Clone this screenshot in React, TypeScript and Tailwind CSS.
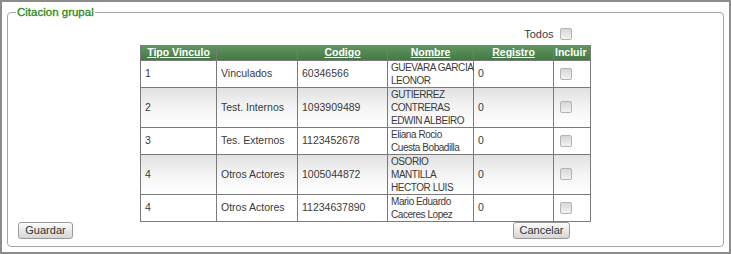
const rows = [
    { tipo: '1', vinculo: 'Vinculados', codigo: '60346566', nombre: ['GUEVARA GARCIA', 'LEONOR'], alt: false },
    { tipo: '2', vinculo: 'Test. Internos', codigo: '1093909489', nombre: ['GUTIERREZ', 'CONTRERAS', 'EDWIN ALBEIRO'], alt: true },
    { tipo: '3', vinculo: 'Tes. Externos', codigo: '1123452678', nombre: ['Eliana Rocio', 'Cuesta Bobadilla'], alt: false },
    { tipo: '4', vinculo: 'Otros Actores', codigo: '1005044872', nombre: ['OSORIO', 'MANTILLA', 'HECTOR LUIS'], alt: true },
    { tipo: '4', vinculo: 'Otros Actores', codigo: '11234637890', nombre: ['Mario Eduardo', 'Caceres Lopez'], alt: false },
]

const Check = () => (
    <span className="inline-block w-[12px] h-[12px] border border-[#b4b4b4] rounded-[2px] bg-gradient-to-b from-[#d6d6d6] to-[#f2f2f2]" />
)

const cell = 'border border-[#7a7a7a] px-[4px] align-middle whitespace-nowrap'

const App = () => {
    return (
        <div className="w-[731px] h-[254px] border-2 border-[#8c8c8c] bg-white text-[#3a3a3a] text-[10.5px] leading-[13px] overflow-hidden" style={{ fontFamily: '"Liberation Sans", Arial, sans-serif' }}>
            <fieldset className="mx-[5px] mt-[3px] h-[242px] border border-[#a6a6a6] rounded-[4px] px-[8px]">
                <legend className="px-[1px] text-[11.5px] leading-[14px] text-[#2a8a1a]" style={{ WebkitTextStroke: '0.3px #2a8a1a' }}>Citacion grupal</legend>
                <div className="flex justify-end items-center gap-[6px] w-[450px] mx-auto pr-[19px] mt-[9px] h-[12px]">
                    <span className="text-[11px]">Todos</span>
                    <Check />
                </div>
                <table className="w-[450px] mx-auto mt-[5px] border-collapse table-fixed">
                    <colgroup>
                        <col className="w-[76px]" />
                        <col className="w-[81px]" />
                        <col className="w-[90px]" />
                        <col className="w-[86px]" />
                        <col className="w-[80px]" />
                        <col className="w-[37px]" />
                    </colgroup>
                    <thead>
                        <tr className="h-[15px] bg-gradient-to-b from-[#619861] to-[#437a43] text-white font-bold text-[10.5px] leading-[14px]">
                            <th className="border-x border-[#7a7a7a] underline whitespace-nowrap">Tipo Vinculo</th>
                            <th className="border-x border-[#7a7a7a]"></th>
                            <th className="border-x border-[#7a7a7a] underline">Codigo</th>
                            <th className="border-x border-[#7a7a7a] underline">Nombre</th>
                            <th className="border-x border-[#7a7a7a] underline">Registro</th>
                            <th className="border-x border-[#7a7a7a] overflow-hidden whitespace-nowrap text-left pl-[1px]">Incluir</th>
                        </tr>
                    </thead>
                    <tbody>
                        {rows.map((r, i) => (
                            <tr key={i} className={r.alt ? 'bg-gradient-to-b from-[#e0e0e0] via-[#f4f4f4] to-white' : 'bg-white'}>
                                <td className={`${cell} ${r.alt ? 'h-[40px]' : 'h-[26px]'}`}>{r.tipo}</td>
                                <td className={cell}>{r.vinculo}</td>
                                <td className={cell}>{r.codigo}</td>
                                <td className="border border-[#7a7a7a] pl-[3px] pr-0 align-middle whitespace-nowrap text-[10px] tracking-[-0.45px]">
                                    {r.nombre.map((n, j) => (
                                        <div key={j}>{n}</div>
                                    ))}
                                </td>
                                <td className={cell}>0</td>
                                <td className="border border-[#7a7a7a] pl-[6px] align-middle">
                                    <div className="flex items-center"><Check /></div>
                                </td>
                            </tr>
                        ))}
                    </tbody>
                </table>
                <div className="flex justify-between items-center pl-[2px] pr-[145px]">
                    <button className="w-[55px] h-[17px] border border-[#9a9a9a] rounded-[3px] bg-gradient-to-b from-[#fbfbfb] to-[#d6d6d6] text-[11px] leading-[15px] text-[#333]">Guardar</button>
                    <button className="w-[57px] h-[17px] border border-[#9a9a9a] rounded-[3px] bg-gradient-to-b from-[#fbfbfb] to-[#d6d6d6] text-[11px] leading-[15px] text-[#333]">Cancelar</button>
                </div>
            </fieldset>
        </div>
    )
}

export default App;
